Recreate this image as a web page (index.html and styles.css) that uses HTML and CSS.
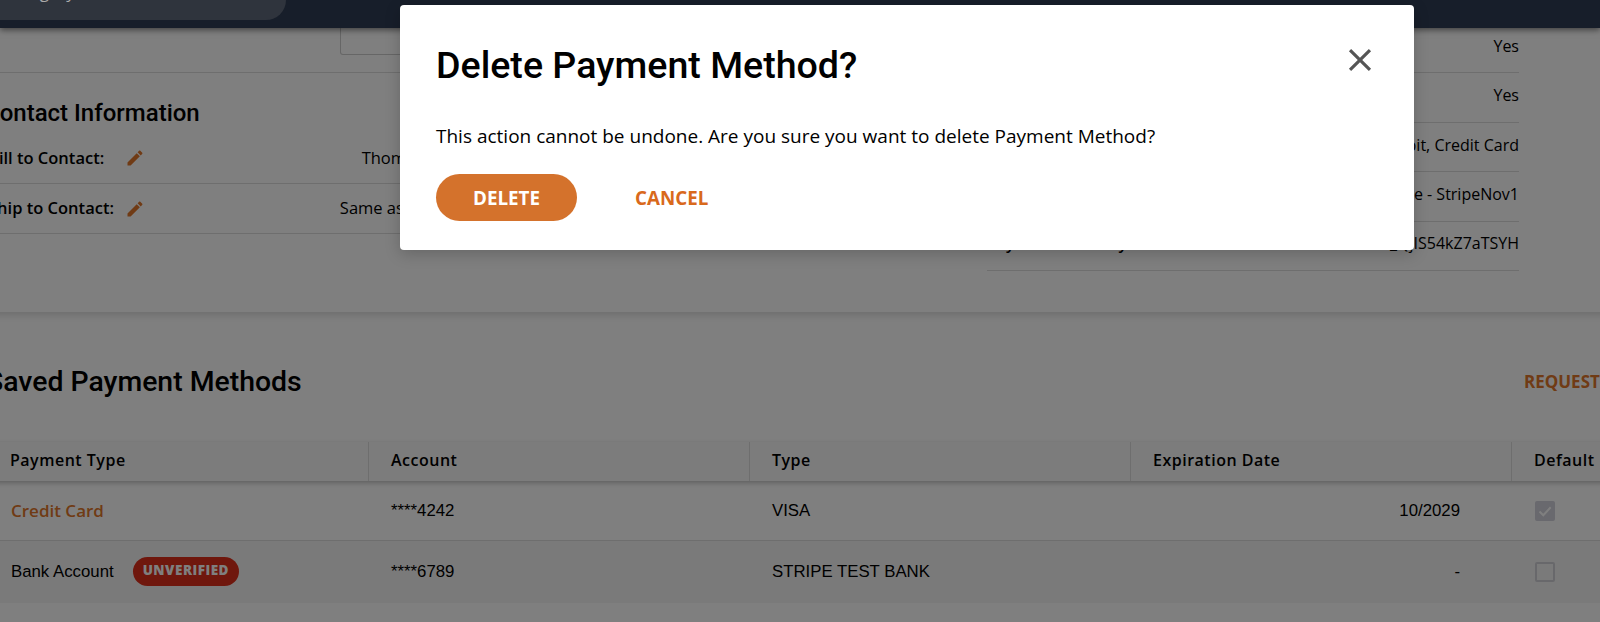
FILE: index.html
```html
<!DOCTYPE html>
<html lang="en">
<head>
    <meta charset="UTF-8">
    <meta name="viewport" content="width=device-width, initial-scale=1.0">
    <title>Delete Payment Method</title>
    <link rel="stylesheet" href="styles.css">
</head>
<body>
    <div class="page">
        <header class="topbar">
            <div class="search">Category</div>
        </header>

        <main class="content">
            <section class="details">
                <div class="details-left">
                    <div class="notes-row"><div class="notes-box"></div></div>
                    <h2 class="contact-title">Contact Information</h2>
                    <div class="contact-row">
                        <span class="contact-label">Bill to Contact:</span>
                        <svg class="pencil" viewBox="0 0 24 24"><path d="M3 17.25V21h3.75L17.81 9.94l-3.75-3.75L3 17.25zM20.71 7.04c.39-.39.39-1.02 0-1.41l-2.34-2.34c-.39-.39-1.02-.39-1.41 0l-1.83 1.83 3.75 3.75 1.83-1.83z"/></svg>
                        <span class="contact-value">Thomas J. Anderson</span>
                    </div>
                    <div class="contact-row">
                        <span class="contact-label">Ship to Contact:</span>
                        <svg class="pencil" viewBox="0 0 24 24"><path d="M3 17.25V21h3.75L17.81 9.94l-3.75-3.75L3 17.25zM20.71 7.04c.39-.39.39-1.02 0-1.41l-2.34-2.34c-.39-.39-1.02-.39-1.41 0l-1.83 1.83 3.75 3.75 1.83-1.83z"/></svg>
                        <span class="contact-value">Same as Bill to Contact</span>
                    </div>
                </div>
                <div class="details-right">
                    <div class="info-row first"><span class="info-label">Tax Exempt</span><span>Yes</span></div>
                    <div class="info-row"><span class="info-label">Allow Invoice</span><span>Yes</span></div>
                    <div class="info-row"><span class="info-label">Payment Types</span><span>Debit, Credit Card</span></div>
                    <div class="info-row"><span class="info-label">Payment Gateway</span><span>Stripe - StripeNov1</span></div>
                    <div class="info-row"><span class="info-label">Payment Gateway</span><span>cus_QjIS54kZ7aTSYH</span></div>
                </div>
            </section>

            <section class="saved">
                <div class="saved-head">
                    <h2 class="saved-title">Saved Payment Methods</h2>
                    <a class="request-link">REQUEST PAYMENT METHOD</a>
                </div>
                <div class="table">
                    <div class="table-head">
                        <div class="th">Payment Type</div>
                        <div class="th">Account</div>
                        <div class="th">Type</div>
                        <div class="th">Expiration Date</div>
                        <div class="th">Default</div>
                    </div>
                    <div class="table-row">
                        <div class="td"><a class="card-link">Credit Card</a></div>
                        <div class="td">****4242</div>
                        <div class="td">VISA</div>
                        <div class="td date">10/2029</div>
                        <div class="td"><span class="check checked"><svg viewBox="0 0 20 20"><path d="M4.5 10.5l3.8 3.8 7.4-8"/></svg></span></div>
                    </div>
                    <div class="table-row alt">
                        <div class="td">Bank Account<span class="badge">UNVERIFIED</span></div>
                        <div class="td">****6789</div>
                        <div class="td">STRIPE TEST BANK</div>
                        <div class="td date">-</div>
                        <div class="td"><span class="check"></span></div>
                    </div>
                </div>
            </section>
        </main>

        <div class="overlay"></div>

        <div class="modal">
            <div class="modal-head">
                <h1>Delete Payment Method?</h1>
                <svg class="close" viewBox="0 0 24 24"><path d="M19 6.41L17.59 5 12 10.59 6.41 5 5 6.41 10.59 12 5 17.59 6.41 19 12 13.41 17.59 19 19 17.59 13.41 12z"/></svg>
            </div>
            <p class="modal-text">This action cannot be undone. Are you sure you want to delete Payment Method?</p>
            <div class="modal-actions">
                <button class="btn-delete">DELETE</button>
                <button class="btn-cancel">CANCEL</button>
            </div>
        </div>
    </div>
</body>
</html>
```

FILE: styles.css
```css
/* Basic reset */
* {
    margin: 0;
    padding: 0;
    box-sizing: border-box;
}

body {
    font-family: 'Open Sans', Arial, sans-serif;
    background-color: #fff;
    color: #000;
    overflow: hidden;
}

.page {
    position: relative;
    width: 1600px;
    height: 622px;
    overflow: hidden;
}

/* Top bar, scrolled mostly out of view */
.topbar {
    display: flow-root;
    height: 28px;
    background-color: #171e2a;
    box-shadow: 0 2px 6px rgba(0, 0, 0, 0.5);
    position: relative;
    z-index: 2;
}

.search {
    width: 310px;
    height: 50px;
    margin: -30px 0 0 -24px;
    padding: 13px 0 0 28px;
    border-radius: 20px;
    background-color: #2f343d;
    color: #aaa;
    font-size: 17px;
    line-height: 17px;
}

.content {
    margin-left: -24px;
    width: 1680px;
}

/* Details card */
.details {
    display: flex;
    height: 284px;
    box-shadow: 0 3px 8px rgba(0, 0, 0, 0.15);
}

.details-left {
    width: 800px;
}

.notes-row {
    height: 45px;
    padding-left: 364px;
    border-bottom: 1px solid #ddd;
}

.notes-box {
    width: 300px;
    height: 27px;
    border: 1px solid #ccc;
    border-top: none;
    border-radius: 0 0 3px 3px;
}

.contact-title {
    font-family: Roboto, sans-serif;
    font-size: 24px;
    font-weight: 500;
    line-height: 28px;
    padding: 26px 0 0 8px;
    height: 66px;
}

.contact-row {
    display: flex;
    align-items: center;
    height: 50px;
    padding: 0 0 2px 12px;
    border-bottom: 1px solid #ddd;
    font-size: 16.5px;
}

.contact-title + .contact-row {
    height: 45px;
    padding-bottom: 8px;
}

.contact-label {
    font-weight: 600;
    width: 137px;
}

.pencil {
    width: 20px;
    height: 20px;
    margin-top: 2px;
    fill: #e0762a;
}

.contact-value {
    width: 370px;
    text-align: right;
}

.details-right {
    margin: -6px 0 0 211px;
    width: 532px;
    font-size: 16px;
}

.info-row {
    display: flex;
    justify-content: space-between;
    align-items: center;
    height: 49.5px;
    padding-bottom: 4px;
    border-bottom: 1px solid #ddd;
}

.info-row.first {
    height: 51px;
    padding-bottom: 2px;
}

.info-row:last-child {
    padding-bottom: 6px;
}

.info-label {
    font-weight: 600;
}

/* Saved payment methods */
.saved-head {
    display: flex;
    justify-content: space-between;
    align-items: center;
    height: 130px;
    padding: 9px 0 0 10px;
}

.saved-title {
    font-family: Roboto, sans-serif;
    font-size: 28.4px;
    font-weight: 500;
}

.request-link {
    font-size: 17px;
    font-weight: 700;
    color: #e0762a;
    width: 132px;
    white-space: nowrap;
}

.table-head,
.table-row {
    display: grid;
    grid-template-columns: 393px 381px 381px 381px 144px;
}

.table-head {
    height: 39px;
    background-color: #f8f8f8;
    box-shadow: 0 2px 5px rgba(0, 0, 0, 0.25);
    position: relative;
}

.th {
    display: flex;
    align-items: center;
    padding: 0 0 3px 22px;
    border-right: 1px solid #ddd;
    font-size: 16px;
    font-weight: 600;
    letter-spacing: 0.5px;
}

.th:first-child {
    padding-left: 34px;
}

.table-row {
    height: 60px;
    border-bottom: 1px solid #ddd;
}

.table-row.alt {
    height: 62px;
    background-color: #f5f5f5;
    border-bottom: none;
}

.td {
    display: flex;
    align-items: center;
    padding-left: 22px;
    font-family: 'Liberation Sans', Arial, sans-serif;
    font-size: 16.8px;
}

.table-row .td:first-child {
    padding-left: 35px;
}

.td.date {
    justify-content: flex-end;
    padding-right: 52px;
}

.card-link {
    font-family: 'Open Sans', sans-serif;
    font-size: 17px;
    font-weight: 600;
    color: #e0762a;
}

.badge {
    margin: 0 0 2px 19px;
    padding: 0 10px;
    height: 29px;
    line-height: 27px;
    border-radius: 15px;
    background-color: #de2e1a;
    color: #fff;
    font-family: 'Open Sans', sans-serif;
    font-size: 13.5px;
    font-weight: 800;
    letter-spacing: 0.5px;
}

.check {
    display: block;
    width: 20px;
    height: 20px;
    margin-left: 1px;
    border: 2px solid #d0d0d6;
    border-radius: 2px;
}

.check.checked {
    background-color: #d2d2dc;
    border: none;
}

.check svg {
    display: block;
    fill: none;
    stroke: #fff;
    stroke-width: 2;
}

/* Modal */
.overlay {
    position: absolute;
    inset: 0;
    z-index: 1;
    background-color: rgba(0, 0, 0, 0.5);
}

.modal {
    position: absolute;
    left: 400px;
    top: 5px;
    z-index: 3;
    width: 1014px;
    height: 245px;
    padding: 0 36px;
    background-color: #fff;
    border-radius: 4px;
    box-shadow: 0 4px 16px rgba(0, 0, 0, 0.2);
}

.modal-head {
    display: flex;
    justify-content: space-between;
    align-items: center;
    height: 100px;
    padding-top: 20px;
}

.modal-head h1 {
    font-family: Roboto, sans-serif;
    font-size: 37.6px;
    font-weight: 500;
}

.close {
    width: 38px;
    height: 38px;
    margin: 0 -1px 10px 0;
    fill: #555;
}

.modal-text {
    font-size: 19px;
    line-height: 26px;
    height: 69px;
    padding-top: 18px;
}

.modal-actions {
    display: flex;
    align-items: center;
}

.modal-actions button {
    font-family: 'Open Sans', sans-serif;
    font-size: 18.8px;
    font-weight: 700;
    border: none;
    background: none;
}

.modal-actions .btn-delete {
    width: 141px;
    height: 47px;
    border-radius: 24px;
    background-color: #d4722c;
    color: #fff;
}

.modal-actions .btn-cancel {
    margin-left: 58px;
    color: #d9691c;
}
```
